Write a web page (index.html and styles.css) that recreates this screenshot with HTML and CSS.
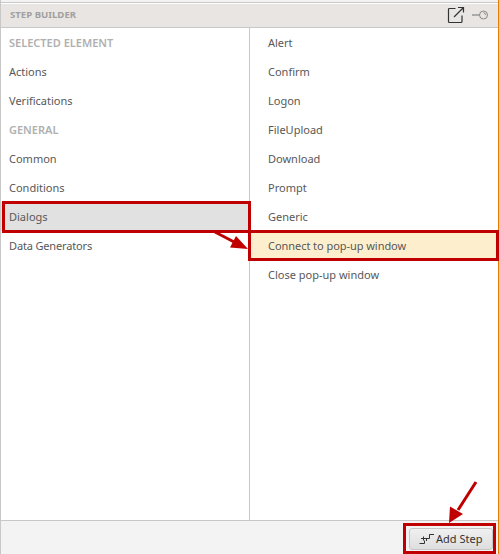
FILE: index.html
```html
<!DOCTYPE html>
<html lang="en">
<head>
<meta charset="utf-8">
<title>Step Builder</title>
<link rel="stylesheet" href="styles.css">
</head>
<body>
<main class="panel">
  <header class="header">
    <h1 class="title">STEP BUILDER</h1>
    <svg class="icon-open" width="18" height="18" viewBox="0 0 18 18"><path d="M8.500 2.500H2.500Q1.500 2.500 1.500 3.500V15.500Q1.500 16.500 2.500 16.500H14Q15 16.500 15 15.500V9.500M7 11L16 2M11 1.500H16.500V6.500"/></svg>
    <svg class="icon-pin" width="18" height="12" viewBox="0 0 18 12"><path class="pin-bar" d="M1 6H8"/><circle cx="12.500" cy="6" r="4"/><path d="M12.500 3.500Q14.500 4 14.500 6"/></svg>
  </header>
  <div class="columns">
    <ul class="list categories">
      <li class="group">SELECTED ELEMENT</li>
      <li>Actions</li>
      <li>Verifications</li>
      <li class="group">GENERAL</li>
      <li>Common</li>
      <li>Conditions</li>
      <li class="selected marked">Dialogs</li>
      <li class="tight">Data Generators</li>
    </ul>
    <ul class="list steps">
      <li>Alert</li>
      <li>Confirm</li>
      <li>Logon</li>
      <li>FileUpload</li>
      <li>Download</li>
      <li>Prompt</li>
      <li>Generic</li>
      <li class="highlighted marked">Connect to pop-up window</li>
      <li>Close pop-up window</li>
    </ul>
  </div>
  <footer class="footer">
    <div class="button-mark">
      <button class="add-step"><svg width="16" height="12" viewBox="0 0 16 12"><path d="M0.500 10.500H5.500V7.500M2 5.500H8.500M4.500 3.500V7.500M7.500 8V5.500H10.500V1.500H15"/></svg><span>Add Step</span></button>
    </div>
  </footer>
</main>
<svg class="arrows" width="499" height="554" viewBox="0 0 499 554">
  <path class="shaft" d="M215 232L236 243M476 482L458 510"/>
  <path class="head" d="M248 249L230 247.500L236 236ZM449 523L450 506.500L463 514Z"/>
</svg>
</body>
</html>
```
FILE: styles.css
```css
* { box-sizing: border-box; }
body {
  margin: 0;
  background: #f3f3f3;
  color: #585858;
  font: 11px/29px "Noto Sans", "Open Sans", sans-serif;
}
.panel {
  display: flex;
  flex-direction: column;
  height: 554px;
  border-left: 1px solid #c8c8c8;
  border-right: 1px solid #e87c00;
  padding-top: 2px;
}
.header {
  display: flex;
  align-items: center;
  height: 26px;
  padding: 0 9px;
  background: #e9e5e2;
  border-top: 1px solid #c8c8c8;
  border-bottom: 1px solid #c8c8c8;
  box-shadow: inset 0 1px #fff;
}
.title {
  flex: 1;
  margin: 0;
  color: #a0a0a0;
  font-size: 9.600px;
  line-height: 24px;
}
.header svg { fill: none; stroke: #333; }
.icon-open { margin-right: 6px; stroke-width: 1.2; }
.header .icon-pin { stroke: #888; }
.icon-pin .pin-bar { stroke-width: 2; stroke: #aaa; }
.columns {
  display: grid;
  grid-template-columns: 249px 1fr;
  flex: 1;
  background: #fff;
}
.list { margin: 0; padding: 0; list-style: none; }
.list li { height: 29px; white-space: nowrap; }
.categories { border-right: 1px solid #c8c8c8; }
.categories li { padding-left: 8px; }
.categories .tight { letter-spacing: -0.15px; }
.steps li { padding-left: 18px; }
.list .group { color: #b0b0b0; font-weight: 600; }
.selected { background: #e1e1e1; }
.highlighted { background: #fdefcd; letter-spacing: -0.05px; }
.marked { position: relative; }
.marked::after {
  content: "";
  position: absolute;
  inset: -1px -2px -2px 1px;
  border: 3px solid #c00000;
}
.steps .marked::after { inset: -1px -1px -1px -2px; }
.footer {
  display: flex;
  justify-content: flex-end;
  height: 34px;
  padding: 2px 2px 0 0;
  border-top: 1px solid #c8c8c8;
  background: #f3f3f3;
}
.button-mark {
  width: 93px;
  height: 31px;
  padding: 2px 0 0 3px;
  border: 3px solid #c00000;
}
.add-step {
  display: flex;
  align-items: center;
  gap: 1px;
  width: 84px;
  height: 22px;
  padding: 0 0 0 9px;
  border: 1px solid #c6c6c6;
  border-radius: 3px;
  background: linear-gradient(#f0f0f0, #dedede);
  color: #333;
  font: 11px/20px "Noto Sans", sans-serif;
  white-space: nowrap;
}
.add-step svg { flex: none; fill: none; stroke: #333; }
.arrows { position: absolute; left: 0; top: 0; pointer-events: none; }
.shaft { fill: none; stroke: #c00000; stroke-width: 3; }
.head { fill: #c00000; }
```
